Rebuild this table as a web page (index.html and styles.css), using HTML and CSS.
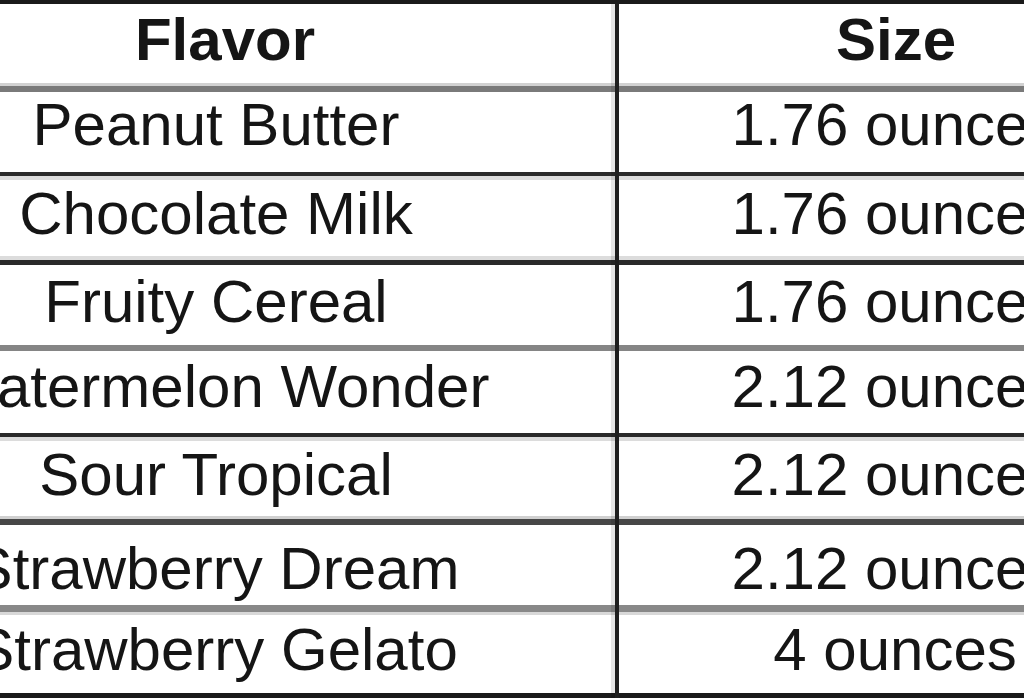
FILE: index.html
```html
<!DOCTYPE html>
<html>
<head>
<meta charset="utf-8">
<link rel="stylesheet" href="styles.css">
</head>
<body>
<div class="table">
  <div class="row head"><div class="cell c1">Flavor</div><div class="cell c2">Size</div></div>
  <div class="row r1"><div class="cell c1">Peanut Butter</div><div class="cell c2">1.76 ounces</div></div>
  <div class="row r2"><div class="cell c1">Chocolate Milk</div><div class="cell c2">1.76 ounces</div></div>
  <div class="row r3"><div class="cell c1">Fruity Cereal</div><div class="cell c2">1.76 ounces</div></div>
  <div class="row r4"><div class="cell c1">Watermelon Wonder</div><div class="cell c2">2.12 ounces</div></div>
  <div class="row r5"><div class="cell c1">Sour Tropical</div><div class="cell c2">2.12 ounces</div></div>
  <div class="row r6"><div class="cell c1">Strawberry Dream</div><div class="cell c2">2.12 ounces</div></div>
  <div class="row r7"><div class="cell c1">Strawberry Gelato</div><div class="cell c2">4 ounces</div></div>
</div>
</body>
</html>
```
FILE: styles.css
```css
html, body {
  margin: 0;
  padding: 0;
  height: 100%;
  overflow: hidden;
  background: #ffffff;
}

.table {
  position: relative;
  margin-left: -183px;
  width: 1354px;
  border-top: 4px solid #1a1a1a;
  font-family: "Liberation Sans", Arial, sans-serif;
  font-size: 60px;
  line-height: 60px;
  color: #151515;
}

.table::after {
  content: "";
  position: absolute;
  top: 0;
  bottom: 0;
  left: 798px;
  width: 4px;
  background: #1e1e1e;
  box-shadow: -4px 0 0 rgba(0, 0, 0, 0.1);
}

.row {
  display: flex;
  box-sizing: border-box;
  border-bottom-style: solid;
}

.cell {
  display: flex;
  justify-content: center;
  white-space: nowrap;
}

.c1 { width: 798px; }
.c2 { width: 552px; margin-left: 4px; }

.head {
  height: 88px;
  padding-top: 6px;
  border-bottom-width: 6px;
  border-bottom-color: #7a7a7a;
  font-weight: bold;
  box-shadow: inset 0 -3px 0 #d2d2d2;
}
.head .c1 { padding-left: 18px; box-sizing: border-box; }
.head .c2 { padding-left: 2px; box-sizing: border-box; }

.r1 {
  height: 84px;
  padding-top: 3px;
  border-bottom-width: 4px;
  border-bottom-color: #2a2a2a;
}

.r2 {
  height: 89px;
  padding-top: 8px;
  border-bottom-width: 5px;
  border-bottom-color: #2a2a2a;
  box-shadow: inset 0 4px 0 #dcdcdc, inset 0 -4px 0 #dcdcdc;
}

.r3 {
  height: 86px;
  padding-top: 7px;
  border-bottom-width: 6px;
  border-bottom-color: #858585;
}

.r4 {
  height: 86px;
  padding-top: 6px;
  border-bottom-width: 4px;
  border-bottom-color: #2a2a2a;
}

.r5 {
  height: 88px;
  padding-top: 8px;
  border-bottom-width: 6px;
  border-bottom-color: #474747;
  box-shadow: inset 0 4px 0 #dcdcdc, inset 0 -3px 0 #d0d0d0;
}

.r6 {
  height: 87px;
  padding-top: 14px;
  border-bottom-width: 7px;
  border-bottom-color: #888888;
}

.r7 {
  height: 86px;
  padding-top: 8px;
  border-bottom-width: 5px;
  border-bottom-color: #1a1a1a;
  box-shadow: inset 0 3px 0 #d8d8d8;
}
```
